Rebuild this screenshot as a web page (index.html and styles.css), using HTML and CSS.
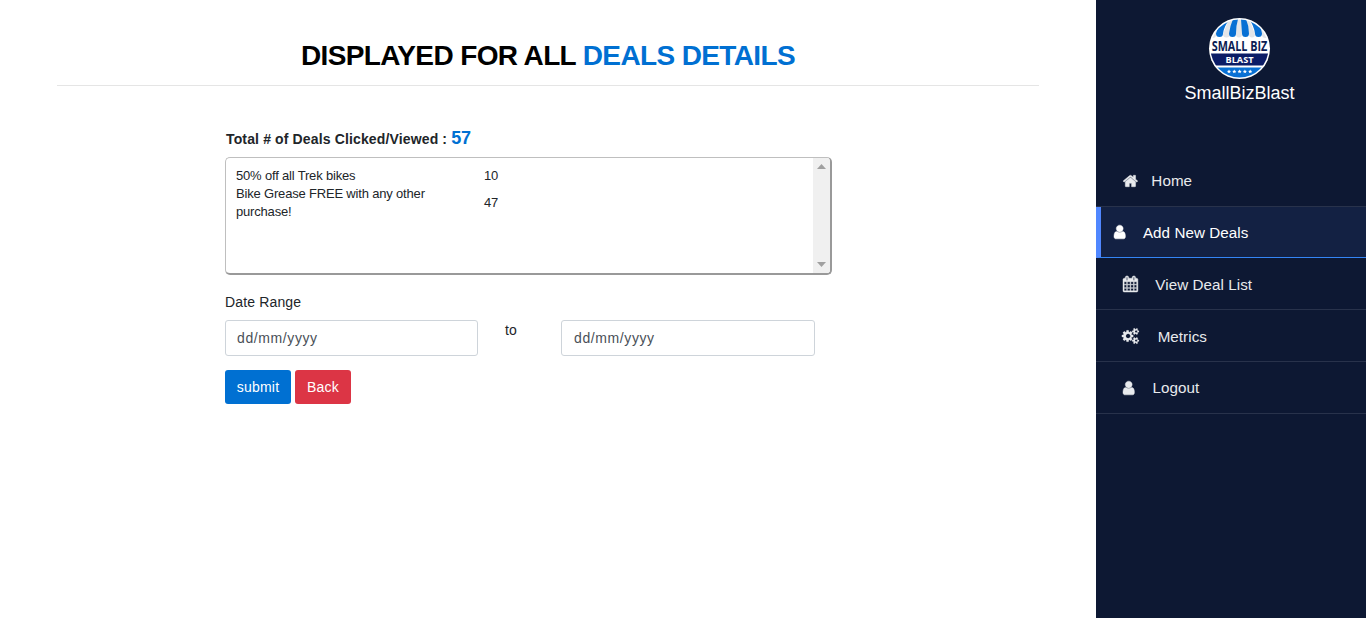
FILE: index.html
```html
<!DOCTYPE html>
<html lang="en">
<head>
<meta charset="utf-8">
<title>Deals Details</title>
<link rel="stylesheet" href="styles.css">
</head>
<body>
<div class="layout">
  <main class="content">
    <h1 class="title">DISPLAYED FOR ALL <span class="accent">DEALS DETAILS</span></h1>
    <section class="panel">
      <h2 class="total">Total # of Deals Clicked/Viewed : <span class="count">57</span></h2>
      <div class="deals">
        <div class="deal-list">
          <span class="deal">50% off all Trek bikes</span><span>10</span>
          <span class="deal">Bike Grease FREE with any other purchase!</span><span>47</span>
        </div>
        <div class="scroll">
          <svg width="9" height="5" viewBox="0 0 9 5"><path d="M0 5L4.5 0L9 5z"/></svg>
          <svg width="9" height="5" viewBox="0 0 9 5"><path d="M0 0L4.5 5L9 0z"/></svg>
        </div>
      </div>
      <div class="range-label">Date Range</div>
      <div class="range">
        <div class="date">dd/mm/yyyy</div>
        <span class="to">to</span>
        <div class="date end">dd/mm/yyyy</div>
      </div>
      <div class="actions">
        <button class="btn primary">submit</button>
        <button class="btn danger">Back</button>
      </div>
    </section>
  </main>
  <aside class="sidebar">
    <div class="brand">
      <svg class="logo" width="61" height="61" viewBox="0 0 61 61">
        <defs><clipPath id="disc"><circle cx="30.500" cy="30.500" r="29"/></clipPath></defs>
        <circle cx="30.500" cy="30.500" r="30.500" fill="#fff"/>
        <g clip-path="url(#disc)">
          <rect width="61" height="61" fill="#fff"/>
          <path fill="#e3e5e8" d="M0 15L8 5L12 7L7 17a3.500 3 0 0 1-7 0zM20 1h7l-6 15a3.500 3.500 0 0 1-7 0zM28 0h5v16a3 3.500 0 0 1-6 0zM35 1h5l6 15a3 3.500 0 0 1-6 0zM48 6h8l4 11a3.500 3 0 0 1-7 0z"/>
          <path fill="#0870d4" d="M14 3L21 1Q15 8 14 15.500a3.500 3.500 0 0 1-7 0Q9 8 14 3zM24 1h5Q27 8 27 15.500a3.500 3.500 0 0 1-7 0Q21 8 24 1zM32 1h5Q40 8 40 15.500a3.500 3.500 0 0 1-7 0zM40 1L47 4Q52 8 53 15.500a3.500 3.500 0 0 1-7 0Q45 8 40 1z"/>
          <rect y="35.500" width="61" height="12" fill="#0b1c66"/>
          <rect y="49.500" width="61" height="13" fill="#0870d4"/>
        </g>
        <text class="logo-top" x="2.700" y="32.700" textLength="55.600" lengthAdjust="spacingAndGlyphs">SMALL BIZ</text>
        <text class="logo-mid" x="16.500" y="45" textLength="28" lengthAdjust="spacingAndGlyphs">BLAST</text>
        <path class="stars" d="M20 51.500l.6 1.300 1.400.1-1 1 .3 1.400-1.300-.7-1.300.7.3-1.400-1-1 1.400-.1zM25.300 51.500l.6 1.300 1.400.1-1 1 .3 1.400-1.300-.7-1.300.7.3-1.400-1-1 1.400-.1zM30.600 51.500l.6 1.300 1.400.1-1 1 .3 1.400-1.300-.7-1.300.7.3-1.400-1-1 1.400-.1zM35.900 51.500l.6 1.300 1.400.1-1 1 .3 1.400-1.300-.7-1.300.7.3-1.400-1-1 1.400-.1zM41.200 51.500l.6 1.300 1.400.1-1 1 .3 1.400-1.300-.7-1.300.7.3-1.400-1-1 1.400-.1z"/>
      </svg>
      <span class="brand-name">SmallBizBlast</span>
    </div>
    <nav class="menu">
      <a class="item home"><svg width="14.860" height="16" viewBox="0 0 1664 1792"><path d="M1408 992v480q0 26-19 45t-45 19h-384v-384h-256v384h-384q-26 0-45-19t-19-45v-480q0-1 .5-3t.5-3l575-474 575 474q1 2 1 6zm223-69l-62 74q-8 9-21 11h-3q-13 0-21-7l-692-577-692 577q-12 8-24 7-13-2-21-11l-62-74q-8-10-7-23.500t11-21.500l719-599q32-26 76-26t76 26l244 204v-195q0-14 9-23t23-9h192q14 0 23 9t9 23v408l219 182q10 8 11 21.500t-7 23.500z"/></svg><span>Home</span></a>
      <a class="item active"><svg width="11.430" height="16" viewBox="256 0 1280 1792"><path d="M1536 1399q0 109-62.500 187t-150.500 78h-854q-88 0-150.500-78t-62.500-187q0-85 8.500-160.500t31.500-152 58.500-131 94-89 134.500-34.500q131 128 313 128t313-128q76 0 134.500 34.500t94 89 58.500 131 31.500 152 8.500 160.500zm-256-887q0 159-112.500 271.500t-271.500 112.500-271.500-112.500-112.500-271.500 112.500-271.500 271.500-112.500 271.500 112.500 112.500 271.500z"/></svg><span>Add New Deals</span></a>
      <a class="item list"><svg width="14.860" height="16" viewBox="64 0 1664 1792"><path d="M192 1664h288v-288h-288v288zm352 0h320v-288h-320v288zm-352-352h288v-320h-288v320zm352 0h320v-320h-320v320zm-352-384h288v-288h-288v288zm736 736h320v-288h-320v288zm-384-736h320v-288h-320v288zm768 736h288v-288h-288v288zm-384-352h320v-320h-320v320zm-352-864v-288q0-13-9.500-22.500t-22.500-9.500h-64q-13 0-22.500 9.500t-9.500 22.500v288q0 13 9.500 22.500t22.500 9.500h64q13 0 22.500-9.500t9.500-22.500zm736 864h288v-320h-288v320zm-384-384h320v-288h-320v288zm384 0h288v-288h-288v288zm32-480v-288q0-13-9.500-22.500t-22.500-9.500h-64q-13 0-22.500 9.500t-9.500 22.500v288q0 13 9.500 22.500t22.500 9.500h64q13 0 22.500-9.500t9.500-22.500zm384-64v1280q0 52-38 90t-90 38h-1408q-52 0-90-38t-38-90v-1280q0-52 38-90t90-38h128v-96q0-66 47-113t113-47h64q66 0 113 47t47 113v96h384v-96q0-66 47-113t113-47h64q66 0 113 47t47 113v96h128q52 0 90 38t38 90z"/></svg><span>View Deal List</span></a>
      <a class="item metrics"><svg width="17.140" height="16" viewBox="0 0 1920 1792"><path d="M832 896q0-106-75-181t-181-75-181 75-75 181 75 181 181 75 181-75 75-181zm768 512q0-52-38-90t-90-38-90 38-38 90q0 53 37.500 90.500t90.500 37.500 90.500-37.500 37.500-90.500zm0-1024q0-52-38-90t-90-38-90 38-38 90q0 53 37.500 90.500t90.500 37.500 90.500-37.500 37.500-90.500zm-448 421v185q0 10-7 19.500t-16 10.500l-155 24q-11 35-32 76 34 48 90 115 7 11 7 20 0 12-7 19-23 30-82.500 89.500t-78.500 59.500q-11 0-21-7l-115-90q-37 19-77 31-11 108-23 155-7 24-30 24h-186q-11 0-20-7.500t-10-17.500l-23-153q-34-10-75-31l-118 89q-7 7-20 7-11 0-21-8-144-133-144-160 0-9 7-19 10-14 41-53t47-61q-23-44-35-82l-152-24q-10-1-17-9.500t-7-19.500v-185q0-10 7-19.500t16-10.500l155-24q11-35 32-76-34-48-90-115-7-11-7-20 0-12 7-20 22-30 82-89t79-59q11 0 21 7l115 90q34-18 77-32 11-108 23-154 7-24 30-24h186q11 0 20 7.500t10 17.500l23 153q34 10 75 31l118-89q8-7 20-7 11 0 21 8 144 133 144 160 0 8-7 19-12 16-42 54t-45 60q23 48 34 82l152 23q10 2 17 10.500t7 19.500zm640 533v140q0 16-149 31-12 27-30 52 51 113 51 138 0 4-4 7-122 71-124 71-8 0-46-47t-52-68q-20 2-30 2t-30-2q-14 21-52 68t-46 47q-2 0-124-71-4-3-4-7 0-25 51-138-18-25-30-52-149-15-149-31v-140q0-16 149-31 13-29 30-52-51-113-51-138 0-4 4-7 4-2 35-20t59-34 30-16q8 0 46 46.500t52 67.500q20-2 30-2t30 2q51-71 92-112l6-2q4 0 124 70 4 3 4 7 0 25-51 138 17 23 30 52 149 15 149 31zm0-1024v140q0 16-149 31-12 27-30 52 51 113 51 138 0 4-4 7-122 71-124 71-8 0-46-47t-52-68q-20 2-30 2t-30-2q-14 21-52 68t-46 47q-2 0-124-71-4-3-4-7 0-25 51-138-18-25-30-52-149-15-149-31v-140q0-16 149-31 13-29 30-52-51-113-51-138 0-4 4-7 4-2 35-20t59-34 30-16q8 0 46 46.500t52 67.500q20-2 30-2t30 2q51-71 92-112l6-2q4 0 124 70 4 3 4 7 0 25-51 138 17 23 30 52 149 15 149 31z"/></svg><span>Metrics</span></a>
      <a class="item logout"><svg width="11.430" height="16" viewBox="256 0 1280 1792"><path d="M1536 1399q0 109-62.500 187t-150.500 78h-854q-88 0-150.500-78t-62.500-187q0-85 8.500-160.500t31.500-152 58.500-131 94-89 134.500-34.500q131 128 313 128t313-128q76 0 134.500 34.500t94 89 58.500 131 31.500 152 8.500 160.500zm-256-887q0 159-112.500 271.500t-271.500 112.500-271.500-112.500-112.500-271.500 112.500-271.500 271.500-112.500 271.500 112.500 112.500 271.500z"/></svg><span>Logout</span></a>
    </nav>
  </aside>
</div>
</body>
</html>
```
FILE: styles.css
```css
* { box-sizing: border-box; }
body {
  margin: 0;
  background: #fff;
  color: #212529;
  font: 14px/21px "Liberation Sans", Arial, sans-serif;
}
.layout { display: flex; height: 618px; overflow: hidden; }
.content { width: 1096px; padding: 0 57px; }
.title {
  margin: 0;
  height: 86px;
  padding-top: 39px;
  border-bottom: 1px solid #e5e5e5;
  color: #000;
  font-size: 28px;
  font-weight: 700;
  line-height: 34px;
  letter-spacing: -.62px;
  text-align: center;
}
.accent, .count { color: #0070d2; }
.panel { width: 607px; margin: 41px 0 0 168px; }
.total {
  margin: 0 0 7px;
  padding-left: 1px;
  font-size: 14px;
  font-weight: 700;
  line-height: 22px;
  letter-spacing: .14px;
}
.count { font-size: 18px; letter-spacing: -.2px; }
.deals {
  display: flex;
  height: 118px;
  border: 1px solid #bfbfbf;
  border-right: 2px solid #999;
  border-bottom: 2px solid #999;
  border-radius: 5px;
  overflow: hidden;
}
.deal-list {
  flex: 1;
  display: grid;
  grid-template-columns: 248px 1fr;
  align-content: start;
  align-items: center;
  padding: 9px 0 0 10px;
  font-size: 13px;
  line-height: 18px;
  letter-spacing: -.18px;
}
.deal { padding-right: 40px; }
.scroll {
  display: flex;
  flex-direction: column;
  align-items: center;
  justify-content: space-between;
  width: 17px;
  padding: 6px 0;
  background: #f0f0f0;
  fill: #a0a0a0;
}
.range-label { margin: 17px 0 7px; letter-spacing: .15px; }
.range { display: flex; }
.date {
  width: 253px;
  height: 36px;
  padding: 7px 11px;
  border: 1px solid #ced4da;
  border-radius: 3px;
  color: #495057;
  letter-spacing: .6px;
}
.end { width: 254px; padding-left: 12px; }
.to { width: 83px; padding-left: 27px; }
.actions { display: flex; gap: 4px; margin-top: 14px; }
.btn {
  height: 34px;
  padding: 0;
  border: 0;
  border-radius: 3px;
  color: #fff;
  font: inherit;
}
.primary { width: 66px; background: #0070d2; letter-spacing: .25px; }
.danger { width: 56px; background: #dc3545; letter-spacing: .2px; }
.sidebar { width: 270px; background: #0d1833; color: #e8eaed; }
.brand {
  display: flex;
  flex-direction: column;
  align-items: center;
  height: 155px;
  padding: 18px 0 0 17px;
}
.logo { overflow: visible; }
.logo-top, .logo-mid { font-family: "Open Sans", sans-serif; font-weight: 700; }
.logo-top { font-size: 13.500px; fill: #0b1c54; }
.logo-mid { font-size: 9.500px; fill: #fff; }
.stars { fill: #fff; }
.brand-name { margin-top: 4px; color: #fff; font-size: 18px; }
.item {
  display: flex;
  align-items: center;
  height: 52px;
  padding-left: 27px;
  border-bottom: 1px solid #28324b;
  font-size: 15.200px;
  letter-spacing: .06px;
}
.item svg { fill: currentColor; stroke: currentColor; stroke-width: 50; overflow: visible; }
.home svg { margin-right: 13.500px; }
.active {
  height: 51px;
  padding-left: 13px;
  border-left: 5px solid #5087ff;
  border-bottom-color: #3485f5;
  background: #132143;
  color: #fff;
}
.active svg { margin-right: 17.500px; }
.list svg { margin-right: 17.500px; }
.list, .metrics { padding-top: 1px; }
.metrics svg { margin-right: 17.500px; stroke-width: 20; }
.logout svg { margin-right: 18px; }
```
